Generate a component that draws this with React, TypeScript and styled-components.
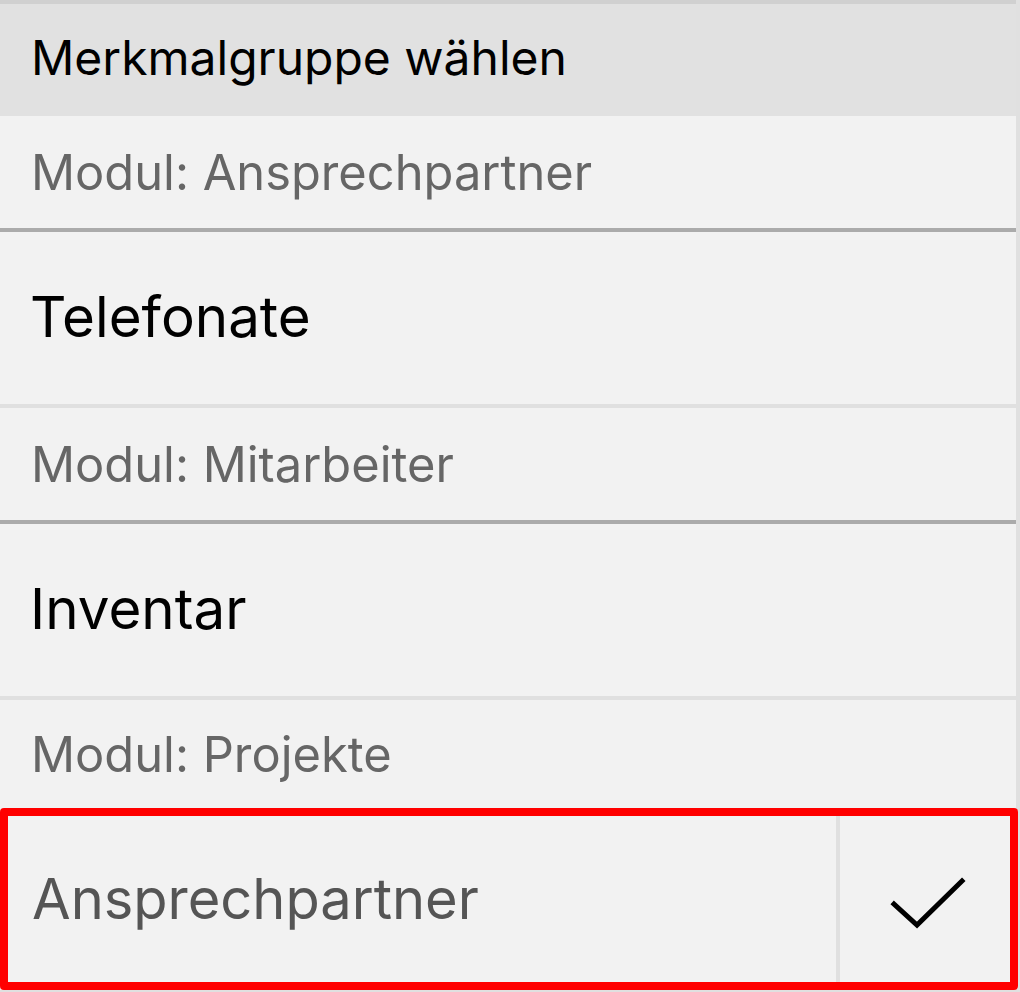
import React from "react";
import styled, { createGlobalStyle } from "styled-components";

const Global = createGlobalStyle`
  html, body { margin: 0; padding: 0; background: #e0e0e0; }
  body { font-family: Inter, "Noto Sans", "Liberation Sans", sans-serif; }
  #root { width: 1020px; height: 992px; overflow: hidden; background: #e0e0e0; }
`;

const Panel = styled.div`
  width: 1016px;
  display: flex;
  flex-direction: column;
  border-top: 4px solid #d0d0d0;
  background: #f2f2f2;
`;

const Header = styled.div`
  height: 112px;
  display: flex;
  align-items: center;
  padding-left: 31px;
  padding-bottom: 6px;
  box-sizing: border-box;
  background: #e1e1e1;
  color: #000;
  font-size: 48px;
  font-weight: 400;
`;

const GroupLabel = styled.div<{ $h?: number }>`
  height: ${(p) => p.$h ?? 112}px;
  display: flex;
  align-items: center;
  padding-left: 31px;
  background: #f2f2f2;
  color: #666;
  font-size: 48.8px;
  border-bottom: ${(p) => (p.$h ? "none" : "4px solid #ababab")};
`;

const Item = styled.div`
  height: 176px;
  display: flex;
  align-items: center;
  padding-left: 30px;
  padding-bottom: 4px;
  box-sizing: border-box;
  background: #f2f2f2;
  color: #000;
  font-size: 56.5px;
  border-bottom: 4px solid #e0e0e0;
`;

const SelectedItem = styled.div`
  width: 1018px;
  height: 182px;
  box-sizing: border-box;
  display: flex;
  align-items: stretch;
  border: 8px solid #ff0000;
  border-radius: 4px;
  background: #f2f2f2;
`;

const SelectedLabel = styled.div`
  flex: 0 0 832px;
  display: flex;
  align-items: center;
  padding-left: 24px;
  box-sizing: border-box;
  color: #555;
  font-size: 56px;
  border-right: 4px solid #e0e0e0;
`;

const CheckCell = styled.div`
  flex: 1;
  display: flex;
  align-items: center;
  justify-content: center;
`;

const CheckIcon = () => (
  <svg width="76" height="56" viewBox="0 0 76 56" style={{ marginLeft: 6, marginTop: 12 }}>
    <polyline
      points="4,27 27,48 72,4"
      fill="none"
      stroke="#000"
      strokeWidth="5"
      strokeLinecap="square"
    />
  </svg>
);

export default function App() {
  return (
    <>
      <Global />
      <Panel>
        <Header>Merkmalgruppe wählen</Header>
        <GroupLabel>Modul: Ansprechpartner</GroupLabel>
        <Item>Telefonate</Item>
        <GroupLabel>Modul: Mitarbeiter</GroupLabel>
        <Item>Inventar</Item>
        <GroupLabel $h={108}>Modul: Projekte</GroupLabel>
        <SelectedItem>
          <SelectedLabel>Ansprechpartner</SelectedLabel>
          <CheckCell>
            <CheckIcon />
          </CheckCell>
        </SelectedItem>
      </Panel>
    </>
  );
}
